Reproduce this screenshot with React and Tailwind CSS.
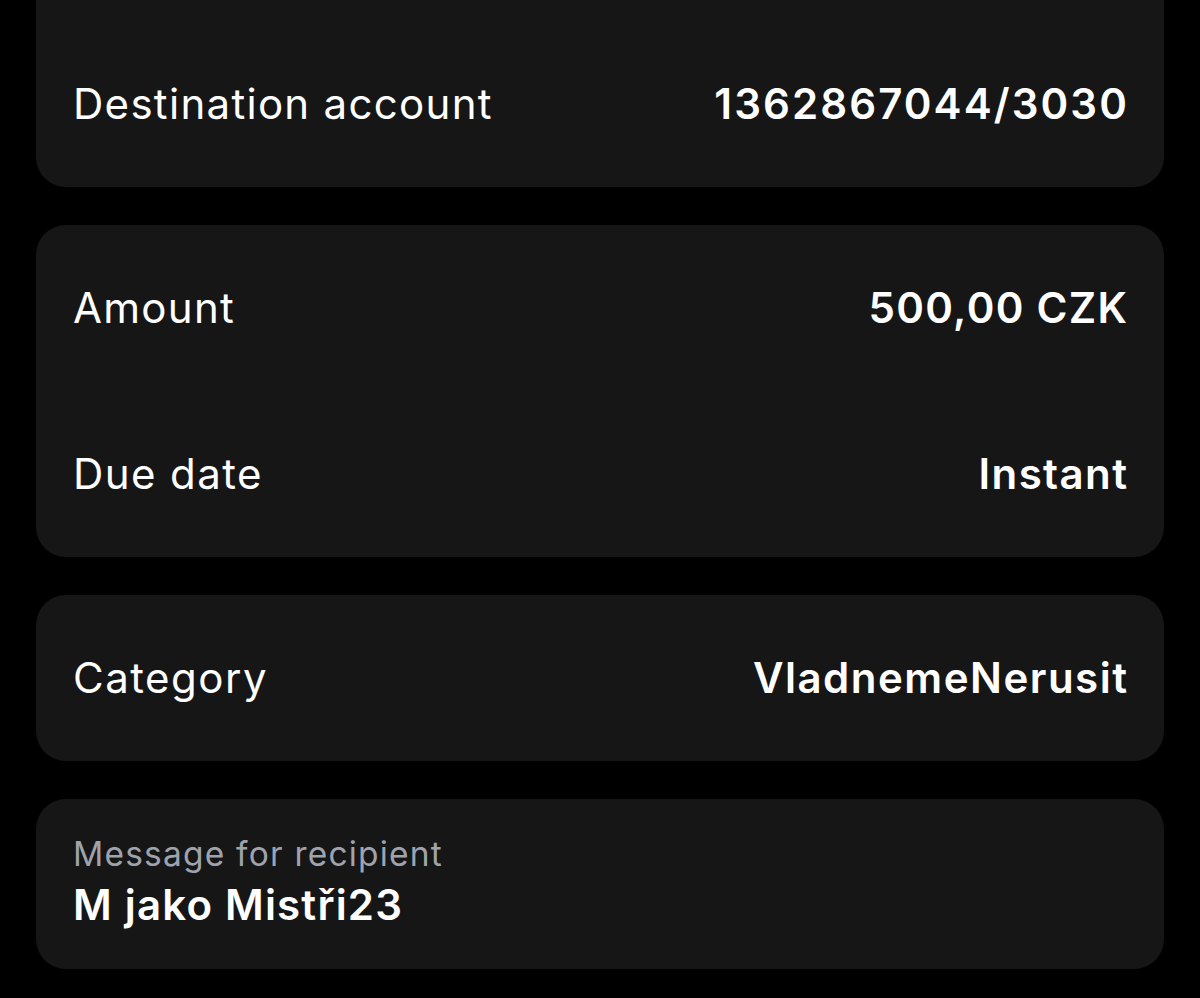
import React from "react";

function Row({ label, value, labelTrack, valueTrack }) {
  return (
    <div className="flex h-[166px] items-center justify-between">
      <span className={"text-[42px] font-normal leading-[48px] text-white " + labelTrack}>{label}</span>
      <span className={"text-[42px] font-semibold leading-[48px] text-white " + valueTrack}>{value}</span>
    </div>
  );
}

export default function App() {
  return (
    <div
      className="flex min-h-[998px] w-[1200px] flex-col gap-[38px] overflow-hidden bg-black px-[36px]"
      style={{ fontFamily: "Inter, 'Noto Sans', sans-serif" }}
    >
      <div className="rounded-b-[30px] bg-[#161616] px-[37px] pt-[21px]">
        <Row
          label="Destination account"
          value="1362867044/3030"
          labelTrack="tracking-[1.3px]"
          valueTrack="tracking-[2.1px] -mr-[2px]"
        />
      </div>
      <div className="rounded-[30px] bg-[#161616] px-[37px]">
        <Row
          label="Amount"
          value="500,00 CZK"
          labelTrack="tracking-[1.3px]"
          valueTrack="tracking-[1.3px] -mr-[1.3px]"
        />
        <Row
          label="Due date"
          value="Instant"
          labelTrack="tracking-[1.4px]"
          valueTrack="tracking-[1.4px] -mr-[1.4px]"
        />
      </div>
      <div className="rounded-[30px] bg-[#161616] px-[37px]">
        <Row
          label="Category"
          value="VladnemeNerusit"
          labelTrack="tracking-[1.5px]"
          valueTrack="tracking-[1.5px] -mr-[1.5px]"
        />
      </div>
      <div className="flex flex-col gap-[7px] rounded-[30px] bg-[#161616] px-[37px] pb-[40px] pt-[36px]">
        <span className="text-[33.5px] font-normal leading-[39px] tracking-[1.2px] text-[#9fa3ae]">
          Message for recipient
        </span>
        <span className="text-[42px] font-semibold leading-[48px] tracking-[1.2px] text-white">
          M jako Mistři23
        </span>
      </div>
    </div>
  );
}
